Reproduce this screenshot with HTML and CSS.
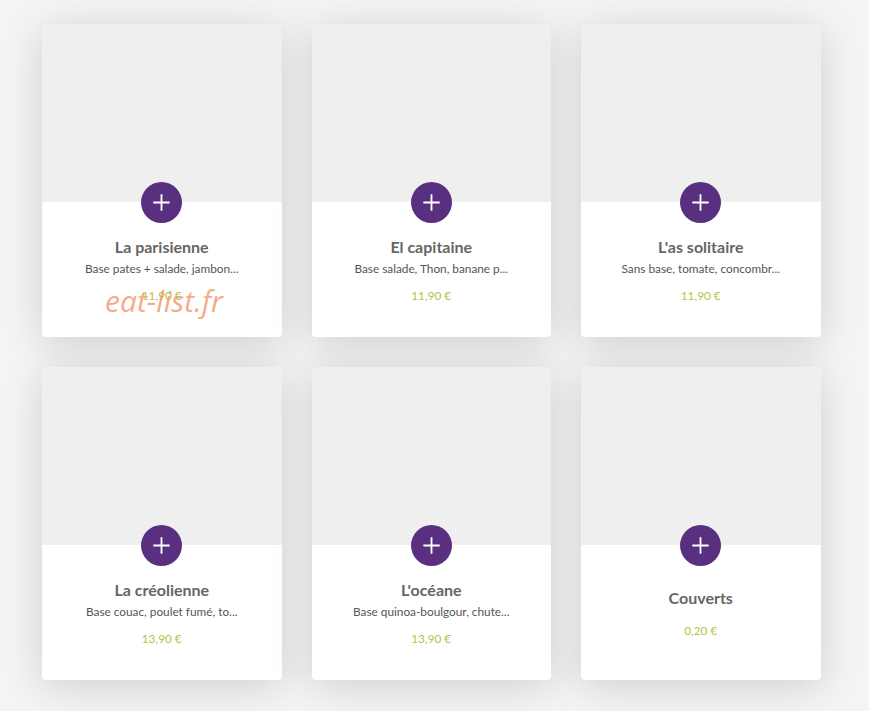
FILE: index.html
```html
<!DOCTYPE html>
<html lang="fr">
<head>
<meta charset="utf-8">
<title>Menu</title>
<link rel="stylesheet" href="styles.css">
</head>
<body>
<main class="menu">
  <article class="card">
    <div class="card-media"></div>
    <button class="add" aria-label="Ajouter"><svg viewBox="0 0 40 40"><path d="M20 12v16M12 20h16"/></svg></button>
    <div class="card-body">
      <h3 class="name">La parisienne</h3>
      <p class="desc">Base pates + salade, jambon...</p>
      <p class="price">11,90 €</p>
    </div>
    <span class="mark">eat-list.fr</span>
  </article>
  <article class="card">
    <div class="card-media"></div>
    <button class="add" aria-label="Ajouter"><svg viewBox="0 0 40 40"><path d="M20 12v16M12 20h16"/></svg></button>
    <div class="card-body">
      <h3 class="name">El capitaine</h3>
      <p class="desc">Base salade, Thon, banane p...</p>
      <p class="price">11,90 €</p>
    </div>
  </article>
  <article class="card">
    <div class="card-media"></div>
    <button class="add" aria-label="Ajouter"><svg viewBox="0 0 40 40"><path d="M20 12v16M12 20h16"/></svg></button>
    <div class="card-body">
      <h3 class="name">L'as solitaire</h3>
      <p class="desc">Sans base, tomate, concombr...</p>
      <p class="price">11,90 €</p>
    </div>
  </article>
  <article class="card">
    <div class="card-media"></div>
    <button class="add" aria-label="Ajouter"><svg viewBox="0 0 40 40"><path d="M20 12v16M12 20h16"/></svg></button>
    <div class="card-body">
      <h3 class="name">La créolienne</h3>
      <p class="desc">Base couac, poulet fumé, to...</p>
      <p class="price">13,90 €</p>
    </div>
  </article>
  <article class="card">
    <div class="card-media"></div>
    <button class="add" aria-label="Ajouter"><svg viewBox="0 0 40 40"><path d="M20 12v16M12 20h16"/></svg></button>
    <div class="card-body">
      <h3 class="name">L'océane</h3>
      <p class="desc">Base quinoa-boulgour, chute...</p>
      <p class="price">13,90 €</p>
    </div>
  </article>
  <article class="card">
    <div class="card-media"></div>
    <button class="add" aria-label="Ajouter"><svg viewBox="0 0 40 40"><path d="M20 12v16M12 20h16"/></svg></button>
    <div class="card-body card-body--short">
      <h3 class="name">Couverts</h3>
      <p class="price">0,20 €</p>
    </div>
  </article>
</main>
</body>
</html>
```
FILE: styles.css
```css
* { box-sizing: border-box; }

html, body {
  margin: 0;
  height: 100%;
}

body {
  background: #f4f4f4;
  font-family: Lato, "Open Sans", sans-serif;
  overflow: hidden;
}

.menu {
  display: grid;
  grid-template-columns: repeat(3, 239.5px);
  grid-auto-rows: 313px;
  column-gap: 30px;
  row-gap: 30px;
  padding: 24px 0 0 42px;
}

.card {
  position: relative;
  display: flex;
  flex-direction: column;
  background: #fff;
  border-radius: 4px;
  overflow: hidden;
  box-shadow: 0 6px 40px rgba(0, 0, 0, 0.15);
}

.card-media {
  height: 178px;
  background: #efefef;
  flex: none;
}

.add {
  position: absolute;
  left: 50%;
  top: 158px;
  width: 41px;
  height: 41px;
  margin-left: -20.5px;
  padding: 0;
  border: 0;
  border-radius: 50%;
  background: #58307f;
  display: flex;
  align-items: center;
  justify-content: center;
}

.add svg {
  width: 41px;
  height: 41px;
  fill: none;
  stroke: #fff;
  stroke-width: 1.8;
}

.card-body {
  flex: 1;
  display: flex;
  flex-direction: column;
  justify-content: center;
  align-items: center;
  text-align: center;
  padding-top: 2px;
}

.name {
  margin: 0;
  font-size: 16px;
  line-height: 20px;
  font-weight: 700;
  color: #666;
}

.desc {
  margin: 4px 0 0;
  font-size: 11.8px;
  line-height: 16px;
  color: #555;
}

.price {
  margin: 11px 0 0;
  font-size: 11.8px;
  line-height: 16px;
  color: #b3c444;
}

.card-body--short .price {
  margin-top: 15px;
}

.mark {
  position: absolute;
  left: 63px;
  top: 257px;
  font-family: "Open Sans", sans-serif;
  font-style: italic;
  font-size: 30px;
  line-height: 40px;
  color: rgba(243, 150, 100, 0.8);
  pointer-events: none;
}
```
